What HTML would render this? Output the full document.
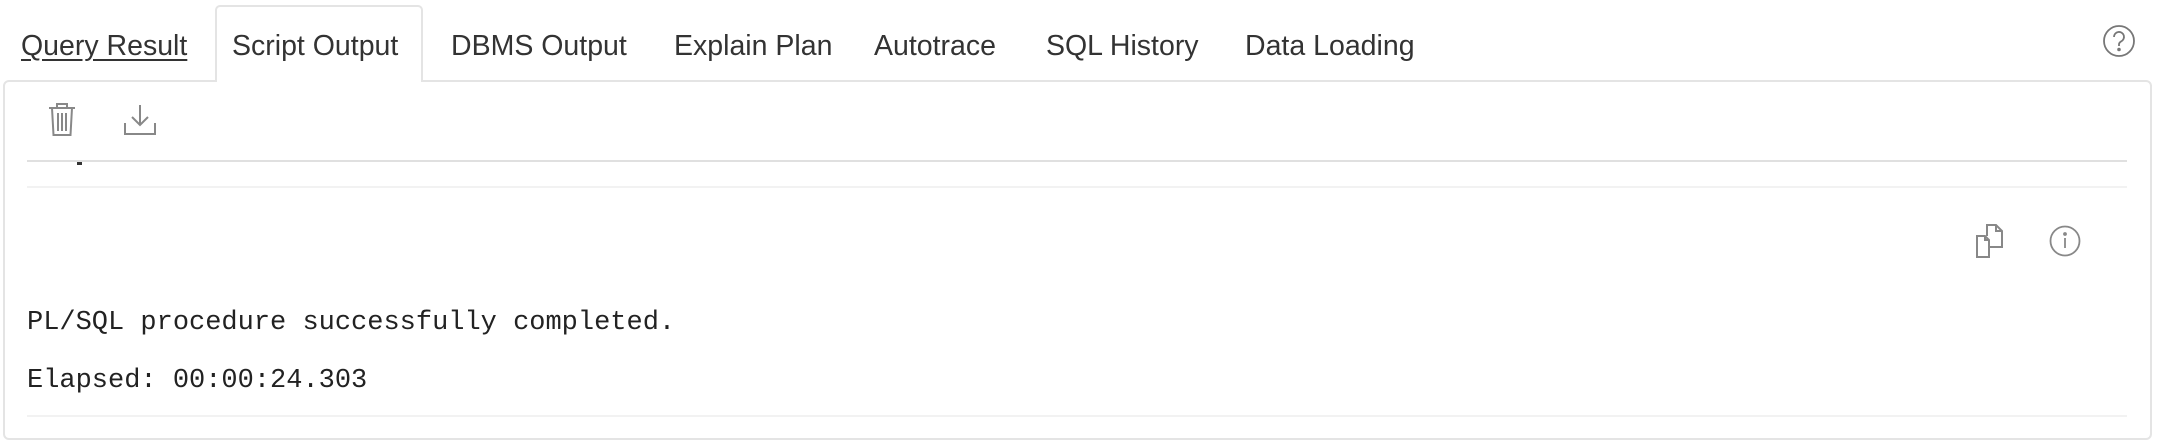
<!DOCTYPE html>
<html><head><style>
body{margin:0;width:2158px;height:422px;background:#fff;position:relative;overflow:hidden;font-family:"Liberation Sans",sans-serif;color:#333}
.t{position:absolute;top:28px;font-size:28.5px;line-height:36px;white-space:nowrap}
.tab{position:absolute;left:215px;top:5px;width:208px;height:77px;border:2px solid #e4e4e4;border-bottom:none;border-radius:5px 5px 0 0;background:#fff;box-sizing:border-box;z-index:2}
.panel{position:absolute;left:3px;top:80px;width:2149px;height:360px;border:2px solid #e4e4e4;border-radius:6px;box-sizing:border-box}
.line{position:absolute;left:27px;width:2100px;height:2px}
.m{position:absolute;left:27px;font-family:"Liberation Mono",monospace;font-size:27px;line-height:32px;color:#222;white-space:nowrap}
</style></head><body>
<div class="panel"></div>
<div class="tab"></div>
<div class="t" style="left:21px;text-decoration:underline;text-underline-offset:4px">Query Result</div>
<div class="t" style="left:232px;z-index:3">Script Output</div>
<div class="t" style="left:451px">DBMS Output</div>
<div class="t" style="left:674px">Explain Plan</div>
<div class="t" style="left:874px">Autotrace</div>
<div class="t" style="left:1046px">SQL History</div>
<div class="t" style="left:1245px">Data Loading</div>
<svg style="position:absolute;left:2102px;top:24px" width="34" height="34" viewBox="0 0 34 34" fill="none" stroke="#777" stroke-width="1.8"><circle cx="17" cy="17" r="15"/><path d="M12 13a5 5 0 1 1 7 4.5c-1.5.8-2 1.5-2 3v1.5"/><circle cx="17" cy="25.5" r="0.9" fill="#777"/></svg>
<svg style="position:absolute;left:48px;top:103px" width="28" height="33" viewBox="0 0 28 33" fill="none" stroke="#888" stroke-width="2"><path d="M1 5h26M9 5V1h10v4M4 5l1.5 27h17L24 5M10 10v18M14 10v18M18 10v18"/></svg>
<svg style="position:absolute;left:124px;top:104px" width="32" height="31" viewBox="0 0 32 31" fill="none" stroke="#888" stroke-width="2"><path d="M16 1v20M8 13l8 8 8-8M1 19v11h30V19"/></svg>
<div class="line" style="top:160px;background:#e0e0e0"></div>
<div style="position:absolute;left:77px;top:162px;width:5px;height:3px;background:#333"></div>
<div class="line" style="top:186px;background:#f2f2f2"></div>
<svg style="position:absolute;left:1976px;top:224px" width="30" height="34" viewBox="0 0 30 34" fill="none" stroke="#888" stroke-width="2"><path d="M1 12h8l4 4v17H1zM9 12v4h4M11 12V1h9l6 6v16H13M20 1v6h6"/></svg>
<svg style="position:absolute;left:2049px;top:225px" width="32" height="32" viewBox="0 0 32 32" fill="none" stroke="#888" stroke-width="1.8"><circle cx="16" cy="16" r="14.5"/><path d="M16 13v10"/><circle cx="16" cy="9" r="1" fill="#888"/></svg>
<div class="m" style="top:307px">PL/SQL procedure successfully completed.</div>
<div class="m" style="top:365px">Elapsed: 00:00:24.303</div>
<div class="line" style="top:415px;background:#f2f2f2"></div>
</body></html>
